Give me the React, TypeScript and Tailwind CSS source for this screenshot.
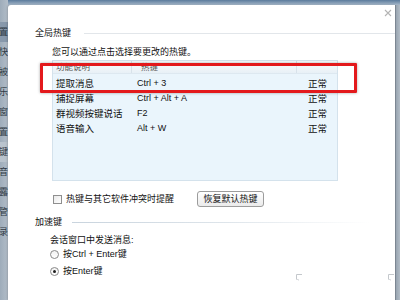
import React from 'react';

const font = { fontFamily: '"Liberation Sans", "Noto Sans CJK SC", sans-serif' };

const sideItems = [
  { label: '基本设置', cls: 'bg-[#8798ab]' },
  { label: '快', cls: '' },
  { label: '团被', cls: '' },
  { label: '音乐', cls: '' },
  { label: '话窗', cls: '' },
  { label: '设置', cls: '' },
  { label: '热键', cls: 'bg-[#b9c3cd]' },
  { label: '语音', cls: '' },
  { label: '件露', cls: '' },
  { label: '件管', cls: '' },
  { label: '记录', cls: '' },
];

const hotkeys = [
  { name: '提取消息', key: 'Ctrl + 3', state: '正常' },
  { name: '捕捉屏幕', key: 'Ctrl + Alt + A', state: '正常' },
  { name: '群视频按键说话', key: 'F2', state: '正常' },
  { name: '语音输入', key: 'Alt + W', state: '正常' },
];

const Radio = ({ checked, label }: { checked?: boolean; label: string }) => (
  <div className="flex items-center h-[14px]">
    <span className="w-[9px] h-[9px] rounded-full border border-[#8a8a8a] bg-gradient-to-b from-[#f2f2f2] to-white flex items-center justify-center">
      {checked && <span className="w-[3px] h-[3px] rounded-full bg-[#1e1e1e]" />}
    </span>
    <span className="ml-[4px]">{label}</span>
  </div>
);

const Corner = () => (
  <svg width="8" height="8" viewBox="0 0 8 8" className="block">
    <path d="M7 1.5H1.5V6.5" stroke="#c4c8cc" strokeWidth="1" fill="none" />
    <path d="M1.5 6.5H3.5V7.5" stroke="#d6d9dc" strokeWidth="1" fill="none" />
  </svg>
);

export default function App() {
  return (
    <div className="w-[400px] h-[300px] overflow-hidden flex bg-[#a9b5c1] text-[9px] text-[#111] leading-none" style={font}>
      {/* window behind the dialog */}
      <div className="w-[8px] shrink-0 flex flex-col pt-[22px] bg-gradient-to-r from-[#9eacba] to-[#b3bec9] text-[#2f3a44]">
        {sideItems.map((s, i) => (
          <div key={i} className={`h-[20px] flex items-center justify-end overflow-hidden ${s.cls}`}>
            <span className="shrink-0 whitespace-nowrap">{s.label}</span>
          </div>
        ))}
      </div>

      <div className="flex-1 flex flex-col">
        <div className="h-[5px] shrink-0 bg-gradient-to-b from-[#5b7b9c] to-[#a7b8c9]" />
        <div className="flex-1 flex">
          {/* dialog */}
          <div className="flex-1 bg-white rounded-tl-[3px] relative flex flex-col pt-[22px] shadow-[-1px_0_2px_rgba(0,0,0,0.15)]">
            <svg width="8" height="8" viewBox="0 0 8 8" className="absolute top-[4px] right-[3px]">
              <path d="M1 1L7 7M7 1L1 7" stroke="#b4b4b4" strokeWidth="1.1" />
            </svg>

            {/* 全局热键 */}
            <div className="h-[12px] flex items-center pl-[27px]">
              <span>全局热键</span>
              <div className="flex-1 h-px ml-[13px] bg-[#e2e6ea]" />
            </div>
            <div className="h-[12px] flex items-center pl-[44px] mt-[7px]">您可以通过点击选择要更改的热键。</div>

            <div className="ml-[44px] mt-[2px] w-[286px] h-[121px] border border-[#d4e2ec] bg-[#eaf5fc] flex flex-col">
              <div className="h-[13px] flex bg-gradient-to-b from-[#fbfdfe] to-[#e8f0f6] text-[#555] text-[8.5px] border-b border-[#dde8f0]">
                <div className="w-[79px] flex items-center pl-[3px] border-r border-[#d8e2ea]">功能说明</div>
                <div className="w-[165px] flex items-center pl-[9px] border-r border-[#d8e2ea]">热键</div>
                <div className="flex-1" />
              </div>
              <div className="pt-[2px] text-[9.5px]">
                {hotkeys.map((h) => (
                  <div key={h.name} className="h-[15px] flex items-center">
                    <div className="w-[79px] pl-[3px]">{h.name}</div>
                    <div className="w-[165px] pl-[5px] text-[9px]">{h.key}</div>
                    <div className="flex-1 pl-[11px]">{h.state}</div>
                  </div>
                ))}
              </div>
            </div>

            <div className="h-[16px] mt-[10px] flex items-center pl-[45px]">
              <span className="w-[9px] h-[9px] border border-[#8f8f8f] bg-gradient-to-br from-[#e9e9e9] to-white" />
              <span className="ml-[4px] w-[131px]">热键与其它软件冲突时提醒</span>
              <button className="h-[16px] w-[67px] rounded-[3px] border border-[#9c9c9c] bg-gradient-to-b from-white to-[#ebebeb] text-[9px] text-[#111] flex items-center justify-center" style={font}>
                恢复默认热键
              </button>
            </div>

            {/* 加速键 */}
            <div className="h-[12px] mt-[9px] flex items-center pl-[27px]">
              <span>加速键</span>
              <div className="w-[298px] h-px ml-[10px] bg-gradient-to-r from-[#c9d4de] via-[#dde4ea] to-transparent" />
            </div>
            <div className="h-[12px] mt-[6px] flex items-center pl-[42px]">会话窗口中发送消息:</div>
            <div className="pl-[42px] mt-[1px]">
              <Radio label="按Ctrl + Enter键" />
            </div>
            <div className="pl-[42px] mt-[3px]">
              <Radio checked label="按Enter键" />
            </div>

            <div className="absolute left-[287px] top-[268px]"><Corner /></div>
            <div className="absolute left-[379px] top-[268px]"><Corner /></div>

            {/* annotation */}
            <div className="absolute left-[32px] top-[58px] w-[317px] h-[30px] border-[3px] border-[#e3191c] rounded-[1px] shadow-[0_0_3px_rgba(0,0,0,0.35)]" />
          </div>
          <div className="w-[5px] shrink-0 border-l border-[#7d8894] bg-gradient-to-r from-[#98a4b0] to-[#b2bcc6]" />
        </div>
      </div>
    </div>
  );
}
